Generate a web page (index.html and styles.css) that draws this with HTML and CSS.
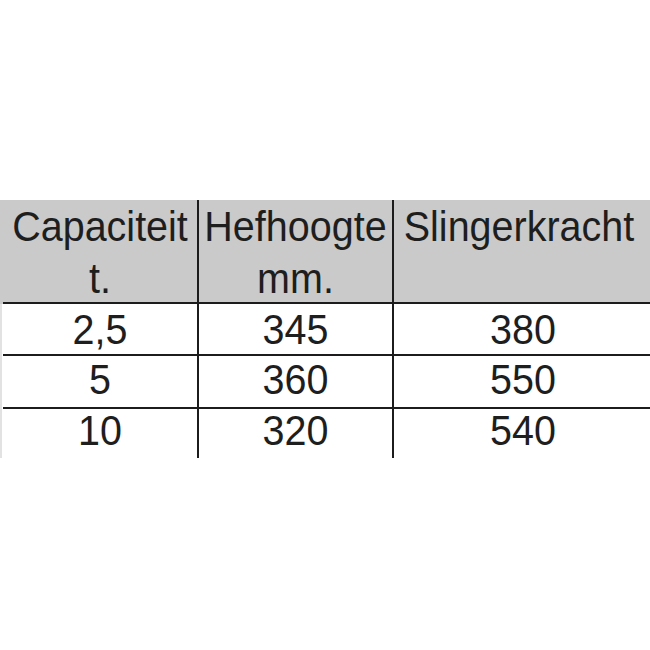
FILE: index.html
```html
<!DOCTYPE html>
<html>
<head>
<meta charset="utf-8">
<link rel="stylesheet" href="styles.css">
</head>
<body>
<div class="page">
  <div class="table">
    <div class="row head">
      <div class="cell c1"><span class="t">Capaciteit</span><span class="t">t.</span></div>
      <div class="cell c2"><span class="t">Hefhoogte</span><span class="t">mm.</span></div>
      <div class="cell c3"><span class="t">Slingerkracht</span></div>
    </div>
    <div class="row data r1">
      <div class="cell c1"><span class="t">2,5</span></div>
      <div class="cell c2"><span class="t">345</span></div>
      <div class="cell c3"><span class="t">380</span></div>
    </div>
    <div class="row data r2">
      <div class="cell c1"><span class="t">5</span></div>
      <div class="cell c2"><span class="t">360</span></div>
      <div class="cell c3"><span class="t">550</span></div>
    </div>
    <div class="row data r3">
      <div class="cell c1"><span class="t">10</span></div>
      <div class="cell c2"><span class="t">320</span></div>
      <div class="cell c3"><span class="t">540</span></div>
    </div>
  </div>
</div>
</body>
</html>
```
FILE: styles.css
```css
html, body {
  margin: 0;
  padding: 0;
  background: #ffffff;
  overflow: hidden;
}
.page {
  width: 650px;
  height: 650px;
  padding-top: 200px;
  box-sizing: border-box;
  overflow: hidden;
}
.table {
  width: 656px;
  font-family: "Liberation Sans", Arial, sans-serif;
  font-size: 39.5px;
  color: #1e1e1e;
}
.row {
  display: grid;
  grid-template-columns: 196px 195px 262px;
  padding-left: 3px;
}
.head {
  background: #cacaca;
}
.data {
  background: #ffffff;
  border-left: 2px solid #e2e2e2;
  padding-left: 1px;
}
.cell {
  display: flex;
  flex-direction: column;
  align-items: center;
  text-align: center;
  border-bottom: 2px solid #1c1c1c;
  line-height: 52px;
  white-space: nowrap;
}
.c1, .c2 {
  border-right: 2px solid #1c1c1c;
}
.c3 {
  padding-right: 4px;
}
.head .c3 {
  padding-right: 12px;
}
.head .cell {
  height: 102px;
}
.r1 .cell {
  height: 50px;
  line-height: 50px;
}
.r2 .cell {
  height: 51px;
  line-height: 47px;
}
.r3 .cell {
  height: 49px;
  line-height: 42px;
  border-bottom: none;
}
.t {
  display: block;
  transform: scaleY(1.06);
}
```
